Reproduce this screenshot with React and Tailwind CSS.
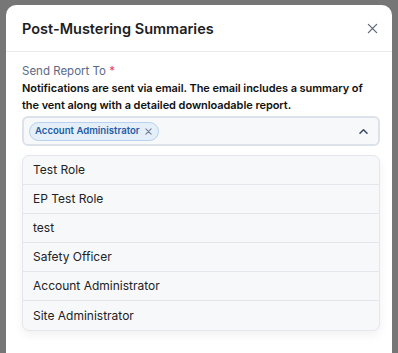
import React from "react";

const items = [
  "Test Role",
  "EP Test Role",
  "test",
  "Safety Officer",
  "Account Administrator",
  "Site Administrator",
];

export default function App() {
  return (
    <div
      className="w-[398px] h-[353px] bg-[#767676] overflow-hidden pt-[5px] pl-[6px]"
      style={{ fontFamily: "Inter, 'Noto Sans', sans-serif" }}
    >
      <div className="w-[386px] h-[360px] bg-white rounded-t-[10px]">
        <div className="h-[47px] flex items-center justify-between pl-4 pr-[14px] border-b border-[#e8eaee]">
          <div className="text-[14.5px] font-semibold text-[#1d1d1f] mt-[1px]">
            Post-Mustering Summaries
          </div>
          <svg width="11" height="11" viewBox="0 0 12 12" className="text-[#5b6782] mt-[1px]">
            <path d="M1.5 1.5 L10.5 10.5 M10.5 1.5 L1.5 10.5" stroke="currentColor" strokeWidth="1.4" strokeLinecap="round" />
          </svg>
        </div>
        <div className="pl-4 pr-3 pt-[10px]">
          <div className="text-[11.5px] text-[#5b6a87] leading-[18px]">
            Send Report To <span className="text-[#e5484d]">*</span>
          </div>
          <div className="text-[11px] font-semibold text-[#111] leading-[17px] tracking-[-0.06px]">
            Notifications are sent via email. The email includes a summary of the vent along with a detailed downloadable report.
          </div>
          <div className="mt-[2px] h-[30px] rounded-[6px] border-2 border-[#dde2ea] bg-[#f7f8fa] flex items-center justify-between pl-[5px] pr-[9px]">
            <div className="h-[19px] flex items-center gap-[5px] rounded-full border border-[#b8d1ee] bg-[#e5eff9] pl-[5px] pr-[6px]">
              <span className="text-[9.6px] font-semibold text-[#1f5ca3] leading-none">Account Administrator</span>
              <svg width="7" height="7" viewBox="0 0 8 8" className="text-[#6f7b8f]">
                <path d="M1 1 L7 7 M7 1 L1 7" stroke="currentColor" strokeWidth="1.2" strokeLinecap="round" />
              </svg>
            </div>
            <svg width="11" height="7" viewBox="0 0 12 8" className="text-[#3d4a63]">
              <path d="M2 6 L6 2 L10 6" stroke="currentColor" strokeWidth="1.8" fill="none" strokeLinecap="round" strokeLinejoin="round" />
            </svg>
          </div>
          <div className="mt-[9px] rounded-[7px] border border-[#e3e6eb] bg-[#f7f8fa] shadow-[0_4px_10px_rgba(0,0,0,0.06)] overflow-hidden">
            {items.map((it, i) => (
              <div
                key={it}
                className={`h-[29px] flex items-center pl-[10px] text-[12px] text-[#222] ${i < items.length - 1 ? "border-b border-[#e3e6eb]" : ""}`}
              >
                {it}
              </div>
            ))}
          </div>
        </div>
      </div>
    </div>
  );
}
